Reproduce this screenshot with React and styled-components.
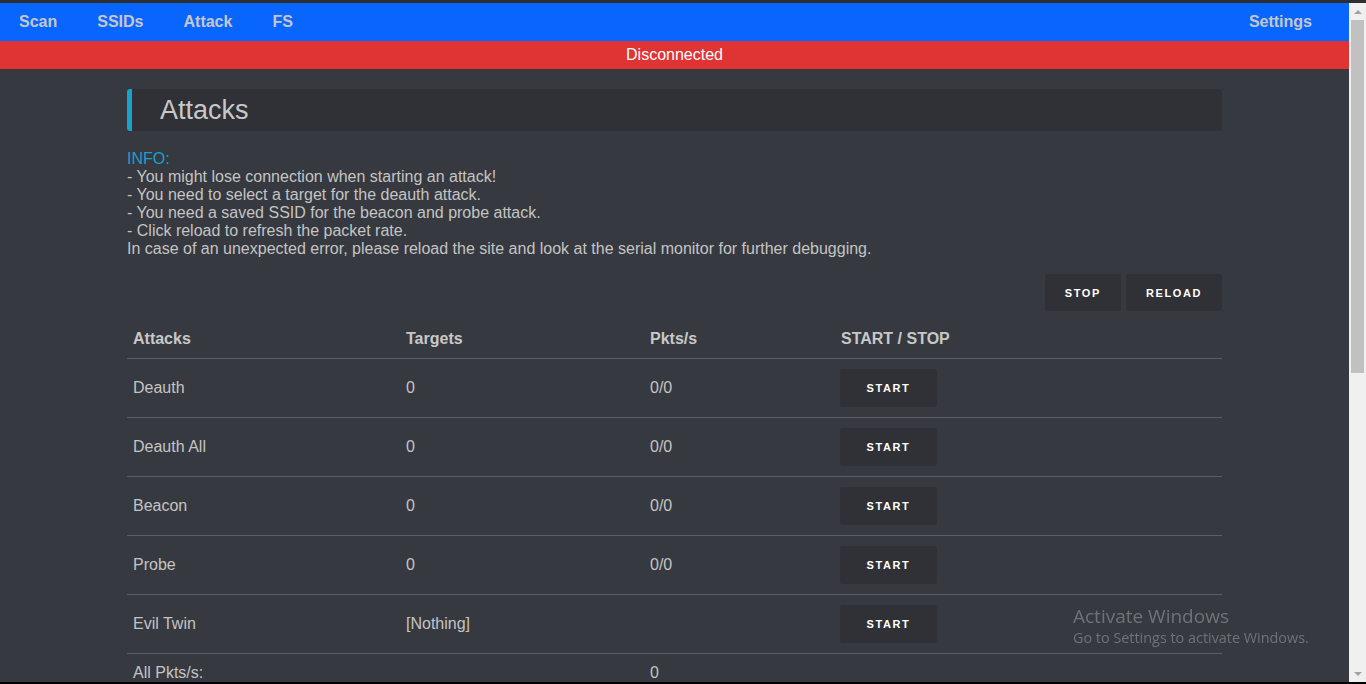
import React from "react";
import styled, { createGlobalStyle } from "styled-components";

const GlobalStyle = createGlobalStyle`
  html, body {
    margin: 0;
    padding: 0;
    background-color: #36393f;
    font-family: "Liberation Sans", Arial, sans-serif;
    color: #c4c4c4;
  }
`;

const Frame = styled.div`
  display: flex;
  flex-direction: column;
  height: 100vh;
  overflow: hidden;
  border-top: 3px solid #2c2e32;
  border-bottom: 2px solid #000000;
  box-sizing: border-box;
`;

const Viewport = styled.div`
  display: flex;
  flex: 1;
  min-height: 0;
`;

const Page = styled.div`
  flex: 1;
  min-width: 0;
  overflow: hidden;
`;

const Scrollbar = styled.div`
  display: flex;
  flex-direction: column;
  width: 17px;
  background-color: #f0f0f0;
`;

const ScrollArrow = styled.div`
  height: 17px;
  display: flex;
  align-items: center;
  justify-content: center;

  &::before {
    content: "";
    border-left: 4px solid transparent;
    border-right: 4px solid transparent;
    ${(p) => (p.$down ? "border-top" : "border-bottom")}: 4px solid #a3a3a3;
  }
`;

const ScrollTrack = styled.div`
  flex: 1;
  padding: 0 2px;
`;

const ScrollThumb = styled.div`
  height: 353px;
  background-color: #c1c1c1;
`;

const Nav = styled.nav`
  display: flex;
  align-items: center;
  gap: 2px;
  height: 38px;
  background-color: #0866ff;
`;

const NavLink = styled.a`
  padding: 0 19px;
  font-size: 16px;
  font-weight: bold;
  color: #c6c6c6;
  text-decoration: none;
  cursor: pointer;
  ${(p) => p.$right && "margin-left: auto; margin-right: 18px;"}
`;

const StatusBar = styled.div`
  height: 28px;
  line-height: 28px;
  background-color: #e03333;
  color: #ffffff;
  text-align: center;
  font-size: 16px;
`;

const Main = styled.main`
  width: 1095px;
  margin: 20px auto 0;
`;

const Header = styled.div`
  height: 42px;
  display: flex;
  align-items: center;
  padding-left: 28px;
  background-color: #2f3136;
  border-left: 5px solid #17a2cc;
  border-radius: 3px;
  font-size: 27px;
  color: #c8c8c8;
`;

const Info = styled.p`
  margin: 19px 0 0;
  font-size: 16px;
  line-height: 18px;
`;

const InfoLabel = styled.span`
  color: #1a9fd0;
`;

const Toolbar = styled.div`
  display: flex;
  justify-content: flex-end;
  gap: 5px;
  margin-top: 16px;
`;

const Button = styled.button`
  height: 37px;
  padding: 0 ${(p) => p.$pad || 20}px;
  border: none;
  border-radius: 3px;
  background-color: #2f3136;
  color: #ffffff;
  font-family: "Liberation Sans", Arial, sans-serif;
  font-size: 11px;
  font-weight: bold;
  letter-spacing: 1.6px;
  cursor: pointer;
`;

const Table = styled.table`
  width: 100%;
  margin-top: 9px;
  border-collapse: collapse;
  table-layout: fixed;
  font-size: 16px;
`;

const Th = styled.th`
  box-sizing: border-box;
  text-align: left;
  font-weight: bold;
  padding: 10px 6px;
  line-height: 18px;
  color: #c8c8c8;
  border-bottom: 1px solid #5c5e63;
  width: ${(p) => p.$w || "auto"};
`;

const Td = styled.td`
  padding: 10px 6px;
  line-height: 18px;
  border-bottom: 1px solid #5c5e63;
  vertical-align: middle;
`;

const StartButton = styled(Button)`
  display: block;
  width: 97px;
  height: 38px;
  padding: 0;
  margin-left: -1px;
`;

const Watermark = styled.div`
  position: fixed;
  left: 1073px;
  top: 604px;
  font-family: "Open Sans", "Noto Sans", sans-serif;
  color: #707276;
  pointer-events: none;
`;

const WatermarkTitle = styled.div`
  font-size: 19px;
  line-height: 24px;
`;

const WatermarkText = styled.div`
  font-size: 14.4px;
  line-height: 20px;
`;

const attacks = [
  { name: "Deauth", targets: "0", pkts: "0/0" },
  { name: "Deauth All", targets: "0", pkts: "0/0" },
  { name: "Beacon", targets: "0", pkts: "0/0" },
  { name: "Probe", targets: "0", pkts: "0/0" },
  { name: "Evil Twin", targets: "[Nothing]", pkts: "" },
];

export default function App() {
  return (
    <>
      <GlobalStyle />
      <Frame>
        <Viewport>
          <Page>
            <Nav>
              <NavLink>Scan</NavLink>
              <NavLink>SSIDs</NavLink>
              <NavLink>Attack</NavLink>
              <NavLink>FS</NavLink>
              <NavLink $right>Settings</NavLink>
            </Nav>
            <StatusBar>Disconnected</StatusBar>
            <Main>
              <Header>Attacks</Header>
              <Info>
                <InfoLabel>INFO:</InfoLabel>
                <br />- You might lose connection when starting an attack!
                <br />- You need to select a target for the deauth attack.
                <br />- You need a saved SSID for the beacon and probe attack.
                <br />- Click reload to refresh the packet rate.
                <br />In case of an unexpected error, please reload the site and look at the serial monitor for further debugging.
              </Info>
              <Toolbar>
                <Button $pad={20}>STOP</Button>
                <Button $pad={20}>RELOAD</Button>
              </Toolbar>
              <Table>
                <thead>
                  <tr>
                    <Th $w="273px">Attacks</Th>
                    <Th $w="244px">Targets</Th>
                    <Th $w="191px">Pkts/s</Th>
                    <Th>START / STOP</Th>
                  </tr>
                </thead>
                <tbody>
                  {attacks.map((a) => (
                    <tr key={a.name}>
                      <Td>{a.name}</Td>
                      <Td>{a.targets}</Td>
                      <Td>{a.pkts}</Td>
                      <Td>
                        <StartButton>START</StartButton>
                      </Td>
                    </tr>
                  ))}
                  <tr>
                    <Td>All Pkts/s:</Td>
                    <Td></Td>
                    <Td>0</Td>
                    <Td></Td>
                  </tr>
                </tbody>
              </Table>
            </Main>
          </Page>
          <Scrollbar>
            <ScrollArrow />
            <ScrollTrack>
              <ScrollThumb />
            </ScrollTrack>
            <ScrollArrow $down />
          </Scrollbar>
        </Viewport>
      </Frame>
      <Watermark>
        <WatermarkTitle>Activate Windows</WatermarkTitle>
        <WatermarkText>Go to Settings to activate Windows.</WatermarkText>
      </Watermark>
    </>
  );
}
